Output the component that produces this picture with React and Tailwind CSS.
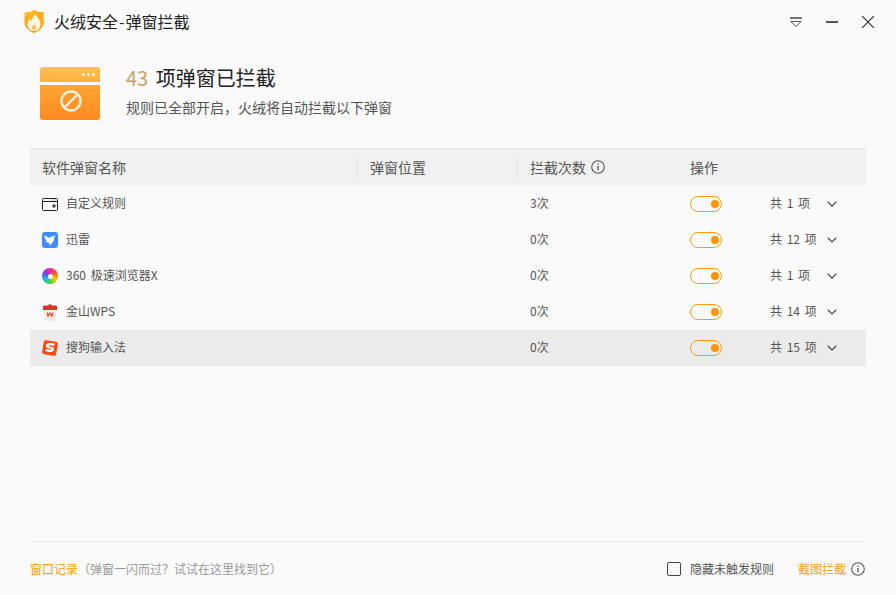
import { ChevronDown } from 'lucide-react';

const rows = [
  { name: '自定义规则', icon: <CustomIcon />, count: '3次', total: '共 1 项' },
  { name: '迅雷', icon: <XunleiIcon />, count: '0次', total: '共 12 项' },
  { name: '360 极速浏览器X', icon: <BrowserIcon />, count: '0次', total: '共 1 项' },
  { name: '金山WPS', icon: <WpsIcon />, count: '0次', total: '共 14 项' },
  { name: '搜狗输入法', icon: <SogouIcon />, count: '0次', total: '共 15 项', active: true },
];

function Logo() {
  return (
    <svg width="20" height="23" viewBox="0 0 20 23" className="-mt-px">
      <defs>
        <linearGradient id="logo-a" x1="0" y1="0" x2="0" y2="1">
          <stop offset="0" stopColor="#ffc01f" />
          <stop offset="1" stopColor="#ff9412" />
        </linearGradient>
      </defs>
      <path d="M10 0c2.500 1.700 5.500 2.500 9.500 2.500v10c0 4.500-3.800 8-9.500 10.500C4.300 20.500.5 17 .5 12.500v-10C4.500 2.500 7.500 1.700 10 0z" fill="url(#logo-a)" />
      <path d="M10 0c2.500 1.700 5.500 2.500 9.500 2.500v10c0 4.500-3.800 8-9.500 10.500z" fill="#ffab1a" />
      <path d="M11.800 3.500c.4 3.500 4.700 5.500 4.700 10.500 0 4.200-3 7-6.500 7s-6.500-2.700-6.500-6.500c0-2.700 1.400-4.400 2.700-6 .2 1.400.6 2.300 1.500 2.700C7.500 8.500 9.600 6 11.800 3.500z" fill="#fff6e6" />
      <path d="M10.300 14c.3 1.300 1.900 2 1.900 3.800 0 1.400-1.100 2.400-2.200 2.400s-2.200-1-2.200-2.400c0-1.700 1.800-2.400 2.500-3.800z" fill="#ffc45e" />
    </svg>
  );
}

function BannerIcon() {
  return (
    <div className="flex h-[53px] w-[60px] flex-col gap-[3px]">
      <div className="flex h-[15px] items-center justify-end gap-[2px] rounded-t-[3px] bg-gradient-to-b from-[#ffc052] to-[#ffb03e] pr-[5px]">
        <span className="h-[3px] w-[3px] rounded-full bg-[#fff3dc]" />
        <span className="h-[3px] w-[3px] rounded-full bg-[#fff3dc]" />
        <span className="h-[3px] w-[3px] rounded-full bg-[#fff3dc]" />
      </div>
      <div className="flex flex-1 items-center justify-center rounded-b-[3px] bg-gradient-to-b from-[#ffa532] to-[#ff8a1f] pb-[3px] pl-px">
        <svg width="22" height="22" viewBox="0 0 22 22" fill="none" stroke="#fff3e2" strokeWidth="2.300">
          <circle cx="11" cy="11" r="9.500" />
          <path d="M17.500 4.500l-13 13" />
        </svg>
      </div>
    </div>
  );
}

function CollapseIcon() {
  return (
    <svg width="12" height="10" viewBox="0 0 12 10" fill="none" stroke="#555" strokeWidth="1">
      <path d="M0 1h12" strokeWidth="1.600" />
      <path d="M.8 4.500h10.400L6 9.400z" />
    </svg>
  );
}

function CloseIcon() {
  return (
    <svg width="12" height="12" viewBox="0 0 12 12" fill="none" stroke="#333" strokeWidth="1.200">
      <path d="M0 0l12 12M12 0L0 12" />
    </svg>
  );
}

function InfoIcon() {
  return (
    <svg width="14" height="14" viewBox="0 0 14 14" fill="none">
      <circle cx="7" cy="7" r="6.300" stroke="#555" strokeWidth="1.100" />
      <path d="M7 6v4.200" stroke="#555" strokeWidth="1.300" />
      <circle cx="7" cy="4" r="0.800" fill="#555" />
    </svg>
  );
}

function CustomIcon() {
  return (
    <svg width="16" height="13" viewBox="0 0 16 13" fill="none" stroke="#222" strokeWidth="1">
      <rect x="0.500" y="0.500" width="15" height="12" rx="1" />
      <path d="M1 3.500h14" />
      <path d="M10 8h4M12 6v4" strokeWidth="1.200" />
      <path d="M10 2h1M12.500 2h1" stroke="#777" />
    </svg>
  );
}

function XunleiIcon() {
  return (
    <svg width="16" height="16" viewBox="0 0 16 16">
      <rect width="16" height="16" rx="3" fill="#3f8cff" />
      <path d="M2 3.500c2 .4 3.800 1.300 5.200 2.600.8-1.100 2.300-1.800 3.500-1.700l2.700-1.400-1.100 2.800c.1 3.100-2 5.800-5.500 7.900.6-1.100.9-2 .9-2.900C5.500 10.700 4.300 9.900 2.700 10c.8-.6 1.600-.9 2.400-1C3.500 7.900 2.500 5.800 2 3.500z" fill="#fff" />
    </svg>
  );
}

function BrowserIcon() {
  return (
    <div className="flex h-4 w-4 items-center justify-center rounded-full bg-[conic-gradient(#f0269a,#ff5a1f,#ffc400,#43d12f,#19b8f0,#7a3cff,#f0269a)]">
      <span className="h-[5px] w-[5px] rounded-full bg-[#fafafa]" />
    </div>
  );
}

function WpsIcon() {
  return (
    <svg width="16" height="17" viewBox="0 0 16 17">
      <path d="M1.500 5h13l-1 11a1 1 0 0 1-1 1h-9a1 1 0 0 1-1-1z" fill="#efe9e2" />
      <path d="M1 2.500a1 1 0 0 1 1-1h3.500L8 0l2.500 1.500H14a1 1 0 0 1 1 1V6H1z" fill="#d6372c" />
      <path d="M4.500 8.500l1.300 5 2.200-3.500 2.200 3.500 1.300-5-1.500.3-.5 1.700L8 7.800 6.500 10.500 6 8.800z" fill="#e8432f" />
    </svg>
  );
}

function SogouIcon() {
  return (
    <svg width="16" height="16" viewBox="0 0 16 16">
      <rect x="0.900" y="0.900" width="14.200" height="14.200" rx="2.200" fill="#fb4b14" transform="rotate(10 8 8)" />
      <path d="M12.500 4.700c-2.200-.8-6-1-7.200.3-.9 1.200.2 2 1.700 2.300l2.400.5c1.500.3 2 1.500 1.100 2.300-1.200 1-4.500.7-6.900-.1" fill="none" stroke="#fff" strokeWidth="2.200" />
    </svg>
  );
}

function Toggle() {
  return (
    <div className="flex h-4 w-8 items-center justify-end rounded-full border border-[#ff9d14] pr-[2px]">
      <span className="h-2 w-2 rounded-full bg-[#ff9500]" />
    </div>
  );
}

function Row({ row }) {
  return (
    <div className={`flex h-9 items-center text-xs text-[#555] [word-spacing:2px] ${row.active ? 'bg-[#ebebeb]' : ''}`}>
      <div className="flex w-[500px] items-center pl-3">
        <span className="flex w-6 items-center">{row.icon}</span>
        <span className="-translate-y-px">{row.name}</span>
      </div>
      <div className="w-[160px] -translate-y-px">{row.count}</div>
      <div className="w-20">
        <Toggle />
      </div>
      <div className="w-[54px] -translate-y-px whitespace-nowrap">{row.total}</div>
      <ChevronDown size={16} strokeWidth={1.600} color="#444" />
    </div>
  );
}

export default function App() {
  return (
    <div className="flex h-[595px] w-[896px] flex-col bg-[#fafafa] font-['Noto_Sans_CJK_SC',sans-serif]">
      <header className="flex h-[44px] items-center pl-[24px] pr-[22px]">
        <Logo />
        <h1 className="ml-[10px] -translate-y-px text-base text-[#222]">
          火绒安全<span className="mx-px">-</span>弹窗拦截
        </h1>
        <div className="ml-auto flex items-center gap-6">
          <CollapseIcon />
          <span className="h-[1.500px] w-3 bg-[#555]" />
          <CloseIcon />
        </div>
      </header>

      <section className="mt-[23px] flex pl-10">
        <BannerIcon />
        <div className="ml-[26px]">
          <div className="-mt-px text-xl leading-[24px] text-[#222]">
            <span className="mr-[3px] text-[#c9a266]">43</span> 项弹窗已拦截
          </div>
          <p className="mt-[7px] text-sm leading-[20px] text-[#555]">规则已全部开启，火绒将自动拦截以下弹窗</p>
        </div>
      </section>

      <section className="mx-[30px] mt-[28px]">
        <div className="flex h-[37px] items-center border-t border-[#e4e4e4] bg-[#f0f0f0] text-sm text-[#555]">
          <div className="flex h-5 w-[328px] items-center border-r border-[#e4e4e4] pl-3">软件弹窗名称</div>
          <div className="flex h-5 w-[160px] items-center border-r border-[#e4e4e4] pl-3">弹窗位置</div>
          <div className="flex w-[172px] items-center gap-[5px] pl-3">
            拦截次数 <InfoIcon />
          </div>
          <div>操作</div>
        </div>
        <div className="mt-px">
          {rows.map((row) => (
            <Row key={row.name} row={row} />
          ))}
        </div>
      </section>

      <footer className="mx-[30px] mt-auto flex h-[54px] items-center border-t border-[#e4e4e4] text-xs">
        <span className="text-[#ff9d14]">窗口记录</span>
        <span className="text-[#999]">（弹窗一闪而过？试试在这里找到它）</span>
        <div className="ml-auto mr-px flex items-center">
          <span className="h-[14px] w-[14px] rounded-[2px] border border-[#444]" />
          <span className="ml-[9px] text-[#555]">隐藏未触发规则</span>
          <span className="ml-6 text-[#ff9d14]">截图拦截</span>
          <span className="ml-[5px]">
            <InfoIcon />
          </span>
        </div>
      </footer>
    </div>
  );
}
